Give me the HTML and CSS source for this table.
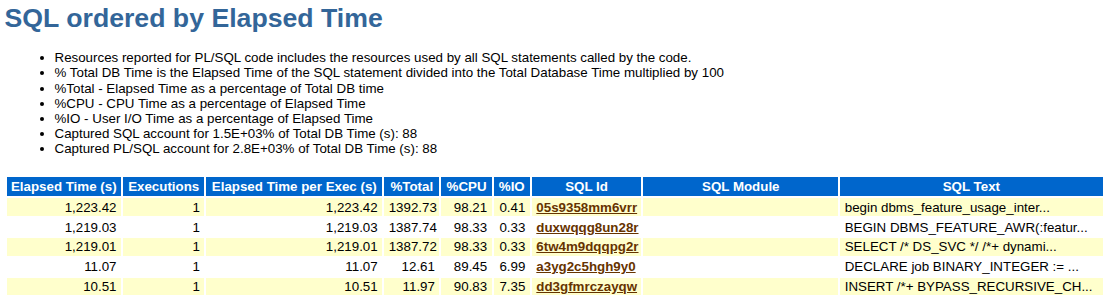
FILE: index.html
```html
<!DOCTYPE html>
<html lang="en">
<head>
  <meta charset="UTF-8">
  <title>SQL ordered by Elapsed Time</title>
  <link rel="stylesheet" href="styles.css">
</head>
<body>
  <h3 class="awr">SQL ordered by Elapsed Time</h3>
  <ul class="notes">
    <li>Resources reported for PL/SQL code includes the resources used by all SQL statements called by the code.</li>
    <li>% Total DB Time is the Elapsed Time of the SQL statement divided into the Total Database Time multiplied by 100</li>
    <li>%Total - Elapsed Time as a percentage of Total DB time</li>
    <li>%CPU - CPU Time as a percentage of Elapsed Time</li>
    <li>%IO - User I/O Time as a percentage of Elapsed Time</li>
    <li>Captured SQL account for 1.5E+03% of Total DB Time (s): 88</li>
    <li>Captured PL/SQL account for 2.8E+03% of Total DB Time (s): 88</li>
  </ul>

  <table class="awr-table">
    <tr>
      <th class="c-elapsed">Elapsed Time (s)</th>
      <th class="c-execs">Executions</th>
      <th class="c-per-exec">Elapsed Time per Exec (s)</th>
      <th class="c-total">%Total</th>
      <th class="c-cpu">%CPU</th>
      <th class="c-io">%IO</th>
      <th class="c-id">SQL Id</th>
      <th class="c-module">SQL Module</th>
      <th class="c-text">SQL Text</th>
    </tr>
    <tr class="hl">
      <td class="num">1,223.42</td>
      <td class="num">1</td>
      <td class="num">1,223.42</td>
      <td class="num">1392.73</td>
      <td class="num">98.21</td>
      <td class="num">0.41</td>
      <td><a class="sqlid" href="#">05s9358mm6vrr</a></td>
      <td></td>
      <td>begin dbms_feature_usage_inter...</td>
    </tr>
    <tr>
      <td class="num">1,219.03</td>
      <td class="num">1</td>
      <td class="num">1,219.03</td>
      <td class="num">1387.74</td>
      <td class="num">98.33</td>
      <td class="num">0.33</td>
      <td><a class="sqlid" href="#">duxwqqg8un28r</a></td>
      <td></td>
      <td>BEGIN DBMS_FEATURE_AWR(:featur...</td>
    </tr>
    <tr class="hl">
      <td class="num">1,219.01</td>
      <td class="num">1</td>
      <td class="num">1,219.01</td>
      <td class="num">1387.72</td>
      <td class="num">98.33</td>
      <td class="num">0.33</td>
      <td><a class="sqlid" href="#">6tw4m9dqqpg2r</a></td>
      <td></td>
      <td>SELECT /* DS_SVC */ /*+ dynami...</td>
    </tr>
    <tr>
      <td class="num">11.07</td>
      <td class="num">1</td>
      <td class="num">11.07</td>
      <td class="num">12.61</td>
      <td class="num">89.45</td>
      <td class="num">6.99</td>
      <td><a class="sqlid" href="#">a3yg2c5hgh9y0</a></td>
      <td></td>
      <td>DECLARE job BINARY_INTEGER := ...</td>
    </tr>
    <tr class="hl">
      <td class="num">10.51</td>
      <td class="num">1</td>
      <td class="num">10.51</td>
      <td class="num">11.97</td>
      <td class="num">90.83</td>
      <td class="num">7.35</td>
      <td><a class="sqlid" href="#">dd3gfmrczayqw</a></td>
      <td></td>
      <td>INSERT /*+ BYPASS_RECURSIVE_CH...</td>
    </tr>
  </table>
</body>
</html>
```

FILE: styles.css
```css
* {
  box-sizing: border-box;
}

body {
  margin: 0;
  padding: 3px 0 0 4.5px;
  font-family: "Liberation Sans", Arial, Helvetica, sans-serif;
  background-color: white;
  color: black;
}

h3.awr {
  margin: 0;
  font-size: 26.67px;
  font-weight: bold;
  line-height: 30.7px;
  color: #336699;
}

.notes {
  margin: 16.5px 0 19px;
  padding-left: 50px;
  font-size: 13.33px;
  line-height: 15.17px;
}

.awr-table {
  table-layout: fixed;
  width: 1100px;
  border-collapse: separate;
  border-spacing: 2.5px;
  font-size: 13.33px;
  line-height: 15.3px;
  white-space: nowrap;
}

.awr-table th {
  background-color: #0066CC;
  color: white;
  font-weight: bold;
  text-align: center;
  padding: 1.25px 3px 2.5px;
  overflow: hidden;
}

.awr-table td {
  background-color: white;
  padding: 1.25px 4.5px;
  vertical-align: top;
  overflow: hidden;
}

.awr-table tr.hl td {
  background-color: #FFFFCC;
}

.awr-table td.num {
  text-align: right;
}

.sqlid {
  font-weight: bold;
  color: #663300;
  text-decoration: underline;
}

.c-elapsed { width: 114px; }
.c-execs { width: 81px; }
.c-per-exec { width: 175px; }
.c-total { width: 55px; }
.c-cpu { width: 50px; }
.c-io { width: 36px; }
.c-id { width: 109px; }
.c-module { width: 194px; }
.c-text { width: 261px; }
```
